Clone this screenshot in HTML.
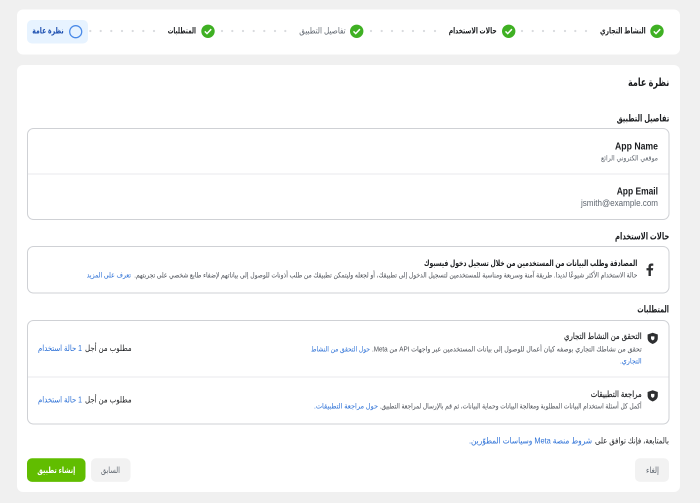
<!DOCTYPE html>
<html lang="ar" dir="rtl"><head><meta charset="utf-8"><title>نظرة عامة</title>
<style>
html,body{margin:0;padding:0;background:#f0f0f0;width:700px;height:503px;overflow:hidden}
svg{display:block;position:absolute;left:0;top:0;filter:blur(.3px)}
text{font-family:"Liberation Sans","DejaVu Sans",sans-serif;direction:rtl;text-anchor:start;fill:#1c1e21;font-size:8.5px}
.l{direction:ltr}
.b{font-weight:700}
.m{stroke:#1c1e21;stroke-width:.15px}
.g{fill:#606770}
.u{fill:#2a6fd6}
.s{font-size:7.4px}
</style></head><body>
<svg width="700" height="503" viewBox="0 0 700 503" xmlns="http://www.w3.org/2000/svg">
<rect x="17" y="9.5" width="663" height="45" rx="6" fill="#fff"/>
<rect x="17" y="65" width="663" height="427" rx="6" fill="#fff"/>

<!-- stepper -->
<rect x="27" y="20" width="61" height="23.5" rx="5" fill="#e7f3ff"/>
<g fill="#d9dbde">
<circle cx="586" cy="31" r="1.1"/><circle cx="575.3" cy="31" r="1.1"/><circle cx="565" cy="31" r="1.1"/><circle cx="554" cy="31" r="1.1"/><circle cx="543" cy="31" r="1.1"/><circle cx="532.7" cy="31" r="1.1"/><circle cx="522" cy="31" r="1.1"/>
<circle cx="435" cy="31" r="1.1"/><circle cx="424" cy="31" r="1.1"/><circle cx="413" cy="31" r="1.1"/><circle cx="402.7" cy="31" r="1.1"/><circle cx="392" cy="31" r="1.1"/><circle cx="381.7" cy="31" r="1.1"/><circle cx="371" cy="31" r="1.1"/>
<circle cx="285.3" cy="31" r="1.1"/><circle cx="275" cy="31" r="1.1"/><circle cx="264.3" cy="31" r="1.1"/><circle cx="253.7" cy="31" r="1.1"/><circle cx="243" cy="31" r="1.1"/><circle cx="232.3" cy="31" r="1.1"/><circle cx="222" cy="31" r="1.1"/>
<circle cx="154" cy="31" r="1.1"/><circle cx="143.3" cy="31" r="1.1"/><circle cx="132.7" cy="31" r="1.1"/><circle cx="122" cy="31" r="1.1"/><circle cx="111.3" cy="31" r="1.1"/><circle cx="100.7" cy="31" r="1.1"/><circle cx="90.3" cy="31" r="1.1"/>
</g>
<g>
<circle cx="657" cy="31.3" r="6.7" fill="#3fb023"/><path d="M653.8 31.4l2.2 2.2 4.2-4.4" fill="none" stroke="#fff" stroke-width="1.5"/>
<circle cx="508.7" cy="31.3" r="6.7" fill="#3fb023"/><path d="M505.5 31.4l2.2 2.2 4.2-4.4" fill="none" stroke="#fff" stroke-width="1.5"/>
<circle cx="356.7" cy="31.3" r="6.7" fill="#3fb023"/><path d="M353.5 31.4l2.2 2.2 4.2-4.4" fill="none" stroke="#fff" stroke-width="1.5"/>
<circle cx="208" cy="31.3" r="6.7" fill="#3fb023"/><path d="M204.8 31.4l2.2 2.2 4.2-4.4" fill="none" stroke="#fff" stroke-width="1.5"/>
<circle cx="75.7" cy="31.7" r="6" fill="none" stroke="#4a8ae8" stroke-width="1.3"/>
</g>
<text class="b" x="645.7" y="33.6" textLength="45.7" lengthAdjust="spacingAndGlyphs">النشاط التجاري</text>
<text class="b" x="496.7" y="33.6" textLength="48" lengthAdjust="spacingAndGlyphs">حالات الاستخدام</text>
<text class="g" x="345.7" y="33.6" textLength="46.4" lengthAdjust="spacingAndGlyphs">تفاصيل التطبيق</text>
<text class="b" x="196" y="33.6" textLength="28.3" lengthAdjust="spacingAndGlyphs">المتطلبات</text>
<text class="b" style="fill:#1c4fb0" x="63.7" y="33.6" textLength="31.4" lengthAdjust="spacingAndGlyphs">نظرة عامة</text>

<!-- headings -->
<text class="b" style="font-size:11px" x="669.3" y="86" textLength="41.3" lengthAdjust="spacingAndGlyphs">نظرة عامة</text>
<text class="b" style="font-size:9.6px" x="669.3" y="121.5" textLength="52.6" lengthAdjust="spacingAndGlyphs">تفاصيل التطبيق</text>

<!-- box 1 -->
<rect x="27.5" y="128.5" width="641.5" height="91" rx="6" fill="#fff" stroke="#cfd1d5"/>
<line x1="28" x2="668.5" y1="174" y2="174" stroke="#e9eaec"/>
<text class="b l" style="text-anchor:end;font-size:9.8px" x="658" y="149.5" textLength="43" lengthAdjust="spacingAndGlyphs">App Name</text>
<text class="g s" x="658" y="160.5" textLength="57" lengthAdjust="spacingAndGlyphs">موقعي الكتروني الرائع</text>
<text class="b l" style="text-anchor:end;font-size:9.8px" x="658" y="194.5" textLength="41.3" lengthAdjust="spacingAndGlyphs">App Email</text>
<text class="g l" style="text-anchor:end;font-size:8.8px" x="658" y="206" textLength="77" lengthAdjust="spacingAndGlyphs">jsmith@example.com</text>

<!-- use cases -->
<text class="b" style="font-size:9.6px" x="669.3" y="239.5" textLength="54.3" lengthAdjust="spacingAndGlyphs">حالات الاستخدام</text>
<rect x="27.5" y="246.5" width="641.5" height="46.5" rx="6" fill="#fff" stroke="#cfd1d5"/>
<path d="M648.5 276v-5.6h-2v-2.3h2v-1.6c0-2 1.2-3 3-3 .8 0 1.6.1 1.8.1v2.1h-1.3c-.9 0-1.1.4-1.1 1.1v1.3h2.3l-.3 2.3h-2v5.6z" fill="#2e2f31"/>
<text class="b" x="637.3" y="266" textLength="213.3" lengthAdjust="spacingAndGlyphs">المصادقة وطلب البيانات من المستخدمين من خلال تسجيل دخول فيسبوك</text>
<text class="g s" style="fill:#4b4f56" x="637.3" y="277.5" textLength="503" lengthAdjust="spacingAndGlyphs">حالة الاستخدام الأكثر شيوعًا لديدا. طريقة آمنة وسريعة ومناسبة للمستخدمين لتسجيل الدخول إلى تطبيقك، أو لجعله وليتمكن تطبيقك من طلب أذونات للوصول إلى بياناتهم لإضفاء طابع شخصي على تجربتهم.</text>
<text class="u s" x="131" y="277.5" textLength="44.3" lengthAdjust="spacingAndGlyphs">تعرف على المزيد</text>

<!-- requirements -->
<text class="b" style="font-size:9.6px" x="669" y="312.5" textLength="31.7" lengthAdjust="spacingAndGlyphs">المتطلبات</text>
<rect x="27.5" y="320.5" width="641.5" height="103.5" rx="6" fill="#fff" stroke="#cfd1d5"/>
<line x1="28" x2="668.5" y1="377" y2="377" stroke="#e9eaec"/>
<path d="M652.7 332.8l5.1 1.7v3.8c0 2.7-2.1 4.7-5.1 5.7-3-1-5.1-3-5.1-5.7v-3.8z" fill="#2e2f31"/>
<path d="M651 336.4h3.4v1.8c0 1-.7 1.7-1.7 2.2-1-.5-1.7-1.2-1.7-2.2z" fill="#fff"/>
<path d="M652.7 390.3l5.1 1.7v3.8c0 2.7-2.1 4.7-5.1 5.7-3-1-5.1-3-5.1-5.7v-3.8z" fill="#2e2f31"/>
<path d="M651 393.9h3.4v1.8c0 1-.7 1.7-1.7 2.2-1-.5-1.7-1.2-1.7-2.2z" fill="#fff"/>

<text class="m" x="641.7" y="339" textLength="77.7" lengthAdjust="spacingAndGlyphs">التحقق من النشاط التجاري</text>
<text class="s" style="fill:#4b4f56" x="641.7" y="351.5" textLength="269.7" lengthAdjust="spacingAndGlyphs">تحقق من نشاطك التجاري بوصفه كيان أعمال للوصول إلى بيانات المستخدمين عبر واجهات API من Meta.</text>
<text class="u s" x="370" y="351.5" textLength="59" lengthAdjust="spacingAndGlyphs">حول التحقق من النشاط</text>
<text class="u s" x="641.7" y="363.5" textLength="21.7" lengthAdjust="spacingAndGlyphs">التجاري.</text>

<text class="m" x="641.7" y="397" textLength="51" lengthAdjust="spacingAndGlyphs">مراجعة التطبيقات</text>
<text class="s" style="fill:#4b4f56" x="641.7" y="408.5" textLength="262" lengthAdjust="spacingAndGlyphs">أكمل كل أسئلة استخدام البيانات المطلوبة ومعالجة البيانات وحماية البيانات، ثم قم بالإرسال لمراجعة التطبيق.</text>
<text class="u s" x="378" y="408.5" textLength="64" lengthAdjust="spacingAndGlyphs">حول مراجعة التطبيقات.</text>

<text x="131.7" y="351" textLength="46.7" lengthAdjust="spacingAndGlyphs">مطلوب من أجل</text>
<text class="u" x="82" y="351" textLength="44" lengthAdjust="spacingAndGlyphs">1 حالة استخدام</text>
<text x="131.7" y="402.5" textLength="46.7" lengthAdjust="spacingAndGlyphs">مطلوب من أجل</text>
<text class="u" x="82" y="402.5" textLength="44" lengthAdjust="spacingAndGlyphs">1 حالة استخدام</text>

<!-- footer -->
<text x="669" y="443.5" textLength="74" lengthAdjust="spacingAndGlyphs">بالمتابعة، فإنك توافق على</text>
<text class="u" x="592" y="443.5" textLength="123" lengthAdjust="spacingAndGlyphs">شروط منصة Meta وسياسات المطوّرين.</text>

<!-- buttons -->
<rect x="27" y="458.3" width="58.5" height="23.6" rx="5" fill="#61bd00"/>
<text class="b" style="fill:#fff" x="75.3" y="473" textLength="38" lengthAdjust="spacingAndGlyphs">إنشاء تطبيق</text>
<rect x="91" y="458.3" width="39.5" height="23.6" rx="5" fill="#f2f2f2"/>
<text class="g" x="120" y="473" textLength="19" lengthAdjust="spacingAndGlyphs">السابق</text>
<rect x="635" y="458.3" width="34" height="23.6" rx="5" fill="#f2f2f2"/>
<text class="g" x="659" y="473" textLength="13" lengthAdjust="spacingAndGlyphs">إلغاء</text>
</svg>
</body></html>
